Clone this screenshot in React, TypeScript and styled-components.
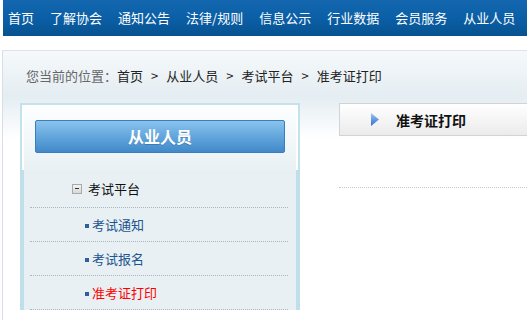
import React from "react";
import styled, { createGlobalStyle } from "styled-components";

const GlobalStyle = createGlobalStyle`
  html, body { margin: 0; padding: 0; background: #fff; }
  body {
    font-family: "Noto Sans CJK SC", "Liberation Sans", sans-serif;
    font-size: 13px;
    color: #222;
  }
  * { box-sizing: border-box; }
`;

const Page = styled.div`
  width: 527px;
  height: 320px;
  overflow: hidden;
  padding-left: 2px;
`;

const Nav = styled.nav`
  display: flex;
  align-items: center;
  gap: 16px;
  height: 36px;
  margin: 0 0 14px 1px;
  padding-left: 5px;
  background: linear-gradient(#1467ae 0%, #0b5fa7 50%, #07528f 100%);
  white-space: nowrap;
`;

const NavLink = styled.a`
  color: #fff;
  font-size: 13px;
  line-height: 36px;
  text-decoration: none;
`;

const Main = styled.div`
  border-top: 1px solid #dde3e7;
  border-left: 1px solid #d5dfe5;
  height: 270px;
  background: linear-gradient(#f6f9fb 0px, #e4edf2 45px, #ffffff 88px);
`;

const Breadcrumb = styled.div`
  height: 52px;
  padding: 16px 0 0 23px;
  line-height: 18px;
  white-space: nowrap;
  color: #222;
`;

const Muted = styled.span`
  color: #666;
`;

const Sep = styled.span`
  margin: 0 8px;
`;

const Row = styled.div`
  display: flex;
  align-items: flex-start;
`;

const Sidebar = styled.aside`
  width: 280px;
  margin-left: 17px;
  flex: none;
`;

const SidebarHead = styled.div`
  padding: 15px 13px 17px;
  border: 2px solid #c3e3ec;
  border-bottom: 0;
  box-shadow: inset 2px 2px 0 #fff, inset -2px 0 0 #fff;
  background: linear-gradient(#fdfeff, #e9f1f5);
`;

const SideButton = styled.div`
  height: 33px;
  border: 1px solid #3a7dbb;
  border-radius: 2px;
  background: linear-gradient(#8ac3ee 0%, #62a6dc 50%, #4189c9 100%);
  color: #fff;
  font-size: 16px;
  font-weight: bold;
  line-height: 31px;
  text-align: center;
  text-shadow: 0 1px 0 rgba(20, 70, 130, 0.35);
`;

const SidebarBody = styled.div`
  border-left: 4px solid #bfe0ea;
  border-right: 4px solid #bfe0ea;
  background: #e8f0f4;
  padding: 0 8px 0 6px;
`;

const GroupTitle = styled.div`
  display: flex;
  align-items: center;
  gap: 6px;
  height: 38px;
  padding-left: 42px;
  border-bottom: 1px dotted #a7b8c3;
  color: #111;
`;

const FoldBox = styled.span`
  position: relative;
  width: 10px;
  height: 10px;
  border: 1px solid #a9a9a9;
  background: linear-gradient(#f4f4f4, #d8d8d8);
  &::after {
    content: "";
    position: absolute;
    left: 2px;
    right: 2px;
    top: 3.5px;
    height: 1px;
    background: #333;
  }
`;

const MenuItem = styled.div<{ $active?: boolean }>`
  display: flex;
  align-items: center;
  height: 34px;
  padding-left: 55px;
  border-bottom: 1px dotted #a7b8c3;
  color: ${(p) => (p.$active ? "#ff0000" : "#22548f")};
  &::before {
    content: "";
    width: 4px;
    height: 4px;
    margin: 2px 3px 0 0;
    background: #2e5e9c;
  }
`;

const Content = styled.section`
  width: 300px;
  margin-left: 39px;
  flex: none;
`;

const ContentHead = styled.div`
  display: flex;
  align-items: center;
  gap: 17px;
  height: 33px;
  padding-left: 31px;
  border: 1px solid #d3d3d3;
  background: linear-gradient(#ffffff, #ebebeb);
  font-size: 14px;
  font-weight: bold;
  color: #111;
`;

const Divider = styled.div`
  margin-top: 51px;
  border-top: 1px dotted #c8c8c8;
`;

const Arrow = () => (
  <svg width="8" height="13" viewBox="0 0 8 13">
    <defs>
      <linearGradient id="arr" x1="0" y1="0" x2="0" y2="1">
        <stop offset="0" stopColor="#9cc6f2" />
        <stop offset="1" stopColor="#2f6fd0" />
      </linearGradient>
    </defs>
    <path d="M0 0 L8 6.5 L0 13 Z" fill="url(#arr)" />
  </svg>
);

const navItems = ["首页", "了解协会", "通知公告", "法律/规则", "信息公示", "行业数据", "会员服务", "从业人员"];
const menu = [
  { label: "考试通知" },
  { label: "考试报名" },
  { label: "准考证打印", active: true },
];

export default function App() {
  return (
    <Page>
      <GlobalStyle />
      <Nav>
        {navItems.map((n) => (
          <NavLink key={n}>{n}</NavLink>
        ))}
      </Nav>
      <Main>
        <Breadcrumb>
          <Muted>您当前的位置：</Muted>首页<Sep>&gt;</Sep>从业人员<Sep>&gt;</Sep>考试平台<Sep>&gt;</Sep>准考证打印
        </Breadcrumb>
        <Row>
          <Sidebar>
            <SidebarHead>
              <SideButton>从业人员</SideButton>
            </SidebarHead>
            <SidebarBody>
              <GroupTitle>
                <FoldBox />
                考试平台
              </GroupTitle>
              {menu.map((m) => (
                <MenuItem key={m.label} $active={m.active}>
                  {m.label}
                </MenuItem>
              ))}
            </SidebarBody>
          </Sidebar>
          <Content>
            <ContentHead>
              <Arrow />
              准考证打印
            </ContentHead>
            <Divider />
          </Content>
        </Row>
      </Main>
    </Page>
  );
}
